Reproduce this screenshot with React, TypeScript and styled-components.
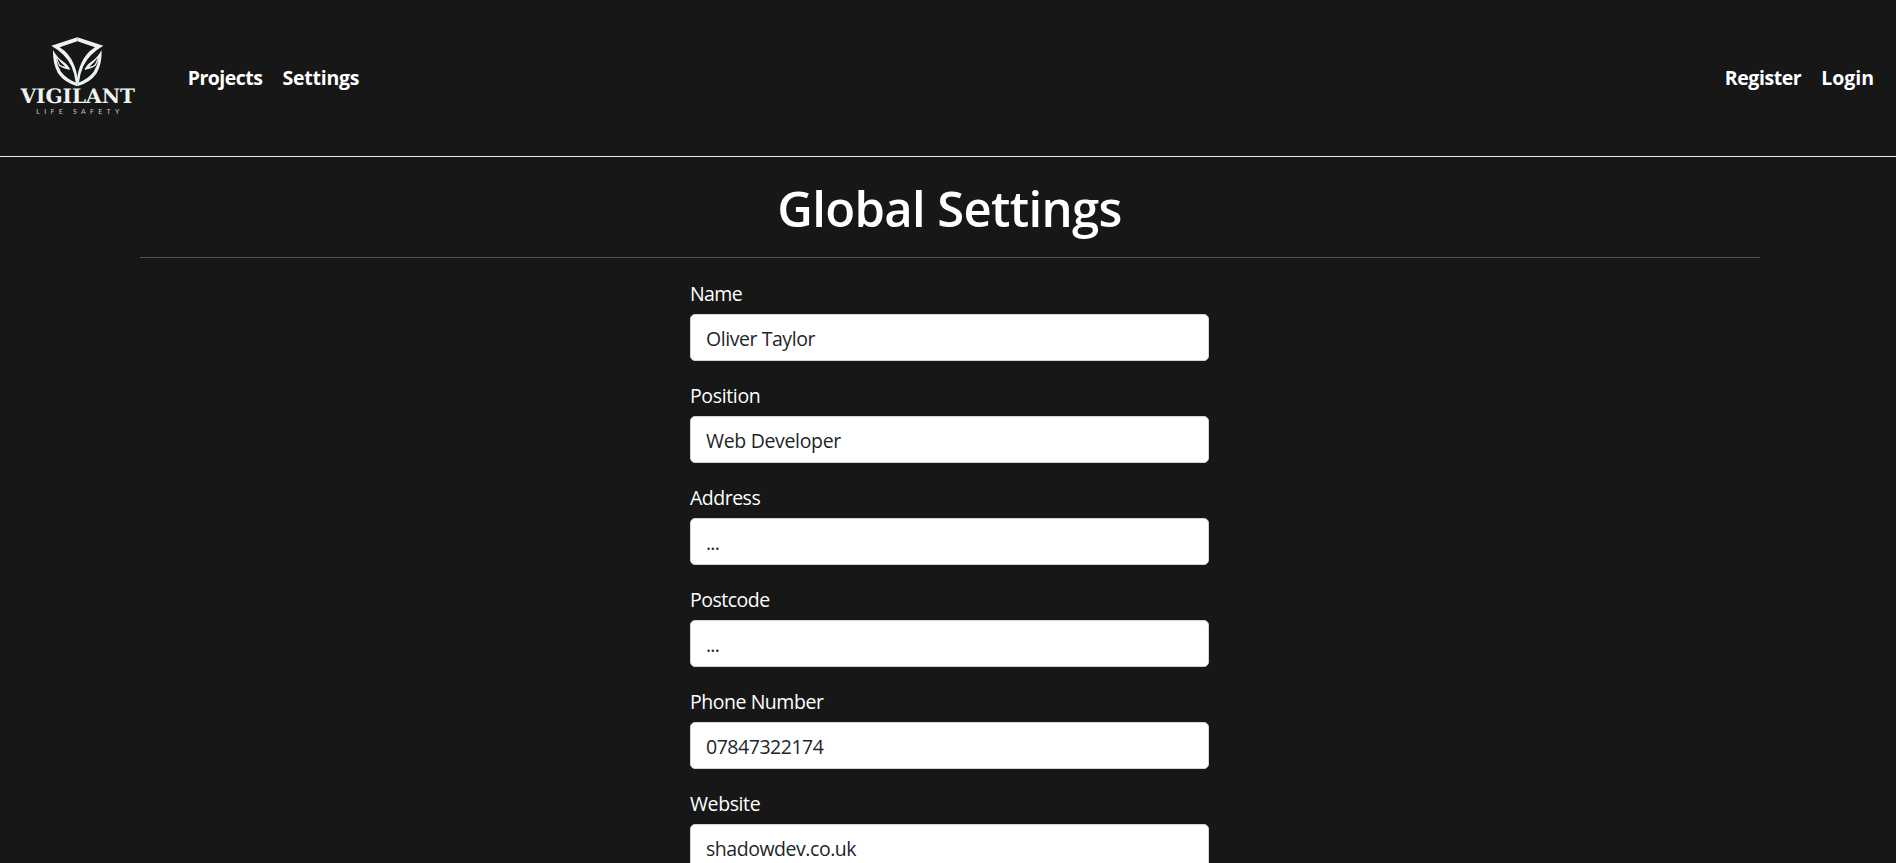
import React from 'react';
import styled, { createGlobalStyle } from 'styled-components';

const GlobalStyle = createGlobalStyle`
  * { box-sizing: border-box; }
  html, body { margin: 0; background: #171717; }
  body {
    height: 863px;
    overflow: hidden;
    color: #fff;
    font-family: 'Open Sans', 'Noto Sans', sans-serif;
    font-size: 19.5px;
    line-height: 30px;
  }
`;

const Header = styled.header`
  display: flex;
  align-items: center;
  height: 157px;
  padding-right: 22px;
  border-bottom: 1px solid #e9e9ef;
`;

const Brand = styled.a`
  display: block;
  width: 155px;
  height: 156px;
  margin-right: 32.7px;
`;

const LogoSvg = styled.svg`
  display: block;
  text-rendering: geometricPrecision;
`;

const Nav = styled.nav`
  display: flex;
  gap: 20px;
  &:last-child { margin-left: auto; }
`;

const NavLink = styled.a<{ $track: number }>`
  color: #fff;
  font-weight: 700;
  text-decoration: none;
  letter-spacing: ${(p) => p.$track}px;
`;

const Main = styled.main`
  padding: 21px 136px 0 140px;
`;

const Title = styled.h1`
  margin: 0;
  height: 80px;
  font-size: 49px;
  line-height: 60px;
  font-weight: 600;
  text-align: center;
  text-indent: -1px;
  letter-spacing: -0.65px;
  border-bottom: 1px solid #525252;
`;

const Form = styled.form`
  width: 519px;
  margin: 21px 0 0 550px;
`;

const Field = styled.div`
  display: flex;
  flex-direction: column;
  height: 102px;
`;

const Label = styled.label<{ $track: number }>`
  height: 35px;
  letter-spacing: ${(p) => p.$track}px;
`;

const Input = styled.input<{ $track: number }>`
  width: 100%;
  height: 47px;
  padding: 2px 15px 0;
  border: 1px solid #ced4da;
  border-radius: 5px;
  background: #fff;
  color: #212529;
  font: inherit;
  letter-spacing: ${(p) => p.$track}px;
  outline: none;
`;

const fields = [
  { label: 'Name', labelTrack: -0.6, value: 'Oliver Taylor', track: -0.44 },
  { label: 'Position', labelTrack: -0.36, value: 'Web Developer', track: -0.33 },
  { label: 'Address', labelTrack: -0.5, value: '...', track: -0.8 },
  { label: 'Postcode', labelTrack: -0.5, value: '...', track: -0.8 },
  { label: 'Phone Number', labelTrack: -0.46, value: '07847322174', track: -0.47 },
  { label: 'Website', labelTrack: -0.4, value: 'shadowdev.co.uk', track: -0.46 },
];

const Wing = () => (
  <>
    <path d="M232 51 L310 76 Q268 100 250 137 Q240 160 237 186 L232 190 L231 178 Q234 150 243 131 Q256 99 285 81 L232 63Z" />
    <path
      fillRule="evenodd"
      d="M305 89 Q306 130 290 159 Q271 187 232 198 L232 188 Q264 177 281 154 Q293 135 296 112 Q293 124 287 136 Q274 146 254 149 Q258 134 276 123 Q292 112 305 89Z M292 113 Q284 126 268 139 Q279 138 284 133 Q289 126 292 113Z"
    />
  </>
);

function Logo() {
  return (
    <LogoSvg width="155" height="156" viewBox="0 0 155 156" fill="#edf3f2" role="img">
      <g transform="translate(0 20.3) scale(.33333)">
        <Wing />
        <g transform="translate(464 0) scale(-1 1)"><Wing /></g>
      </g>
      <text x="20.5" y="102.9" fontFamily="'DejaVu Serif', serif" fontWeight="700" fontSize="20" textLength="114.5" lengthAdjust="spacingAndGlyphs">VIGILANT</text>
      <text x="36.3" y="114" fontFamily="Lato, sans-serif" fontSize="7" textLength="83" fill="#c4c9c8">LIFE SAFETY</text>
    </LogoSvg>
  );
}

export default function App() {
  return (
    <>
      <GlobalStyle />
      <Header>
        <Brand><Logo /></Brand>
        <Nav>
          <NavLink $track={-0.5}>Projects</NavLink>
          <NavLink $track={-0.25}>Settings</NavLink>
        </Nav>
        <Nav>
          <NavLink $track={-0.45}>Register</NavLink>
          <NavLink $track={0}>Login</NavLink>
        </Nav>
      </Header>
      <Main>
        <Title>Global Settings</Title>
        <Form>
          {fields.map((f) => (
            <Field key={f.label}>
              <Label $track={f.labelTrack}>{f.label}</Label>
              <Input $track={f.track} defaultValue={f.value} />
            </Field>
          ))}
        </Form>
      </Main>
    </>
  );
}
